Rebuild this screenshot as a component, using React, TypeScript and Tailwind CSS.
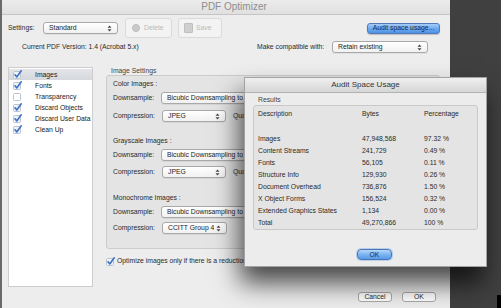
import React from 'react';

const FONT = { fontFamily: '"Liberation Sans", Arial, sans-serif' };

const Arrows: React.FC = () => (
    <svg width="5" height="7" viewBox="0 0 5 7" className="shrink-0">
        <path d="M2.5 0.5 L4.5 2.8 H0.5 Z" fill="#444" />
        <path d="M2.5 6.5 L4.5 4.2 H0.5 Z" fill="#444" />
    </svg>
);

const Select: React.FC<{ label: string; className?: string }> = ({ label, className }) => (
    <div
        className={`flex items-center justify-between h-[12px] pl-[5px] pr-[5px] rounded-[3px] border border-[#a9a9a9] bg-gradient-to-b from-white to-[#f1f1f1] shadow-[0_1px_0_rgba(0,0,0,0.06)] text-[#222] ${className ?? ''}`}
    >
        <span className="whitespace-nowrap overflow-hidden">{label}</span>
        <Arrows />
    </div>
);

const Check: React.FC<{ on: boolean }> = ({ on }) => (
    <svg width="9" height="9" viewBox="0 0 9 9" className="shrink-0">
        <rect x="0.5" y="1.5" width="7" height="7" rx="1" fill={on ? '#eef3fb' : '#fff'} stroke="#bcc3cc" />
        {on && <path d="M2 4.8 L3.8 7 L8.2 0.8" fill="none" stroke="#3f72c4" strokeWidth="1.6" strokeLinecap="round" strokeLinejoin="round" />}
    </svg>
);

const LIST = [
    { name: 'Images', on: true },
    { name: 'Fonts', on: true },
    { name: 'Transparency', on: false },
    { name: 'Discard Objects', on: true },
    { name: 'Discard User Data', on: true },
    { name: 'Clean Up', on: true },
];

const RESULTS = [
    ['Images', '47,948,568', '97.32 %'],
    ['Content Streams', '241,729', '0.49 %'],
    ['Fonts', '56,105', '0.11 %'],
    ['Structure Info', '129,930', '0.26 %'],
    ['Document Overhead', '736,876', '1.50 %'],
    ['X Object Forms', '156,524', '0.32 %'],
    ['Extended Graphics States', '1,134', '0.00 %'],
    ['Total', '49,270,866', '100 %'],
];

const FieldRow: React.FC<{ label: string; children: React.ReactNode; className?: string }> = ({ label, children, className }) => (
    <div className={`flex items-center h-[12px] ${className ?? ''}`}>
        <span className="w-[48px] shrink-0 text-[#2a2a2a]">{label}</span>
        {children}
    </div>
);

const App: React.FC = () => {
    return (
        <div className="relative w-[501px] h-[308px] overflow-hidden flex bg-[#404040] text-[6.8px] leading-[8px]" style={FONT}>
            {/* PDF Optimizer window */}
            <div className="w-[450px] h-full shrink-0 flex flex-col bg-[#ededed] border-l-2 border-[#6a6a6a]">
                {/* Title bar */}
                <div className="h-[15px] shrink-0 flex items-center justify-center pl-[16px] bg-gradient-to-b from-[#ececec] to-[#e0e0e0] border-b border-[#c4c4c4] text-[10px] text-[#8e8e8e]">
                    PDF Optimizer
                </div>

                {/* Settings row */}
                <div className="flex items-center h-[20px] mt-[3px] pr-[10px]">
                    <span className="ml-[6px] w-[35px] text-[#2a2a2a]">Settings:</span>
                    <Select label="Standard" className="w-[75px]" />
                    <div className="ml-[7px] w-[47px] h-[20px] flex items-center gap-[4px] pl-[6px] rounded-[3px] border border-[#dadada] bg-[#f3f3f3] text-[#b9b9b9]">
                        <span className="w-[8px] h-[8px] rounded-full bg-[#c9c9c9] border border-[#bdbdbd]" />
                        Delete
                    </div>
                    <div className="ml-[6px] w-[44px] h-[20px] flex items-center gap-[3px] pl-[5px] rounded-[3px] border border-[#dadada] bg-[#f3f3f3] text-[#b9b9b9]">
                        <span className="w-[9px] h-[10px] rounded-[1px] bg-[#cfcfcf] border border-[#bfbfbf]" />
                        Save
                    </div>
                    <div className="ml-auto w-[73px] h-[11px] flex items-center justify-center rounded-[3px] border border-[#5279b8] bg-gradient-to-b from-[#a6cdf6] via-[#6eaaf0] to-[#4f93e6] text-[#1a2a44] shadow-[0_1px_1px_rgba(0,0,0,0.2)]">
                        Audit space usage...
                    </div>
                </div>

                {/* Version row */}
                <div className="flex items-center h-[12px] mt-[3px]">
                    <span className="ml-[20px] w-[235px] text-[#2a2a2a]">Current PDF Version: 1.4 (Acrobat 5.x)</span>
                    <span className="w-[75px] text-[#2a2a2a]">Make compatible with:</span>
                    <Select label="Retain existing" className="w-[96px]" />
                </div>

                {/* Body */}
                <div className="flex mt-[14px]">
                    <div className="ml-[6px] w-[85px] h-[220px] shrink-0 bg-white border border-[#cdcdcd] pt-[1px]">
                        {LIST.map((item, i) => (
                            <div
                                key={item.name}
                                className={`flex items-center h-[11px] pl-[4px] ${i === 0 ? 'bg-gradient-to-b from-[#e3e5e8] to-[#d5d8dc]' : ''}`}
                            >
                                <Check on={item.on} />
                                <span className="ml-[13px] text-[#222] whitespace-nowrap">{item.name}</span>
                            </div>
                        ))}
                    </div>

                    <div className="ml-[13px] flex-1 mr-[10px] flex flex-col">
                        <span className="h-[8px] pl-[5px] text-[#444]">Image Settings</span>
                        <div className="h-[174px] rounded-[3px] border border-[#cbcbcb] bg-[#e4e4e4] pl-[6px] pt-[4px]">
                            <div className="h-[8px] text-[#2a2a2a]">Color Images :</div>
                            <FieldRow label="Downsample:" className="mt-[4px]">
                                <Select label="Bicubic Downsampling to" className="w-[120px]" />
                            </FieldRow>
                            <FieldRow label="Compression:" className="mt-[6px]">
                                <Select label="JPEG" className="ml-[1px] w-[64px]" />
                                <span className="ml-[7px] text-[#2a2a2a]">Quality:</span>
                            </FieldRow>

                            <div className="h-[8px] mt-[15px] text-[#2a2a2a]">Grayscale Images :</div>
                            <FieldRow label="Downsample:" className="mt-[4px]">
                                <Select label="Bicubic Downsampling to" className="w-[120px]" />
                            </FieldRow>
                            <FieldRow label="Compression:" className="mt-[5px]">
                                <Select label="JPEG" className="ml-[1px] w-[64px]" />
                                <span className="ml-[7px] text-[#2a2a2a]">Quality:</span>
                            </FieldRow>

                            <div className="h-[8px] mt-[16px] text-[#2a2a2a]">Monochrome Images :</div>
                            <FieldRow label="Downsample:" className="mt-[4px]">
                                <Select label="Bicubic Downsampling to" className="w-[120px]" />
                            </FieldRow>
                            <FieldRow label="Compression:" className="mt-[4px]">
                                <Select label="CCITT Group 4" className="ml-[1px] w-[65px]" />
                            </FieldRow>
                        </div>
                        <div className="flex items-center h-[10px] mt-[7px] text-[#2a2a2a]">
                            <Check on={true} />
                            <span className="ml-[2px] whitespace-nowrap">Optimize images only if there is a reduction in size</span>
                        </div>
                    </div>
                </div>

                {/* Bottom buttons */}
                <div className="flex justify-end gap-[10px] pr-[14px] mt-[5px]">
                    <div className="w-[34px] h-[10px] flex items-center justify-center rounded-[3px] border border-[#a9a9a9] bg-white text-[#2a2a2a]">Cancel</div>
                    <div className="w-[34px] h-[10px] flex items-center justify-center rounded-[3px] border border-[#a9a9a9] bg-white text-[#2a2a2a]">OK</div>
                </div>
            </div>

            {/* Dark backdrop at right */}
            <div className="flex-1 flex flex-col justify-end items-end">
                <div className="w-[4px] h-[13px] bg-black" />
            </div>

            {/* Audit Space Usage dialog */}
            <div className="absolute left-[244px] top-[77px] w-[243px] h-[190px] flex flex-col bg-[#ececec] border border-[#a3a3a3] shadow-[-4px_16px_24px_rgba(0,0,0,0.7)]">
                <div className="h-[15px] shrink-0 flex items-center justify-center bg-gradient-to-b from-[#efefef] to-[#d6d6d6] border-b border-[#b2b2b2] text-[8px] text-[#333]">
                    Audit Space Usage
                </div>
                <span className="h-[8px] mt-[3px] ml-[13px] text-[#444]">Results</span>
                <div className="mt-[1px] ml-[8px] w-[225px] h-[125px] rounded-[3px] border border-[#c9c9c9] bg-[#e4e4e4] pl-[4px] pt-[4px] text-[#2a2a2a]">
                    <div className="grid grid-cols-[104px_62px_1fr] h-[8px]">
                        <span>Description</span>
                        <span>Bytes</span>
                        <span>Percentage</span>
                    </div>
                    <div className="mt-[15px]">
                        {RESULTS.map(([name, bytes, pct]) => (
                            <div key={name} className="grid grid-cols-[104px_62px_1fr] h-[12px] leading-[12px]">
                                <span className="whitespace-nowrap">{name}</span>
                                <span>{bytes}</span>
                                <span>{pct}</span>
                            </div>
                        ))}
                    </div>
                </div>
                <div className="mt-[19px] ml-[112px] w-[35px] h-[11px] flex items-center justify-center rounded-[4px] border border-[#4a76b6] bg-gradient-to-b from-[#b5d6f8] via-[#7bb4f0] to-[#559ae8] text-[#1a2a44] shadow-[0_0_0_1px_rgba(90,150,230,0.35)]">
                    OK
                </div>
            </div>
        </div>
    );
};

export default App;
